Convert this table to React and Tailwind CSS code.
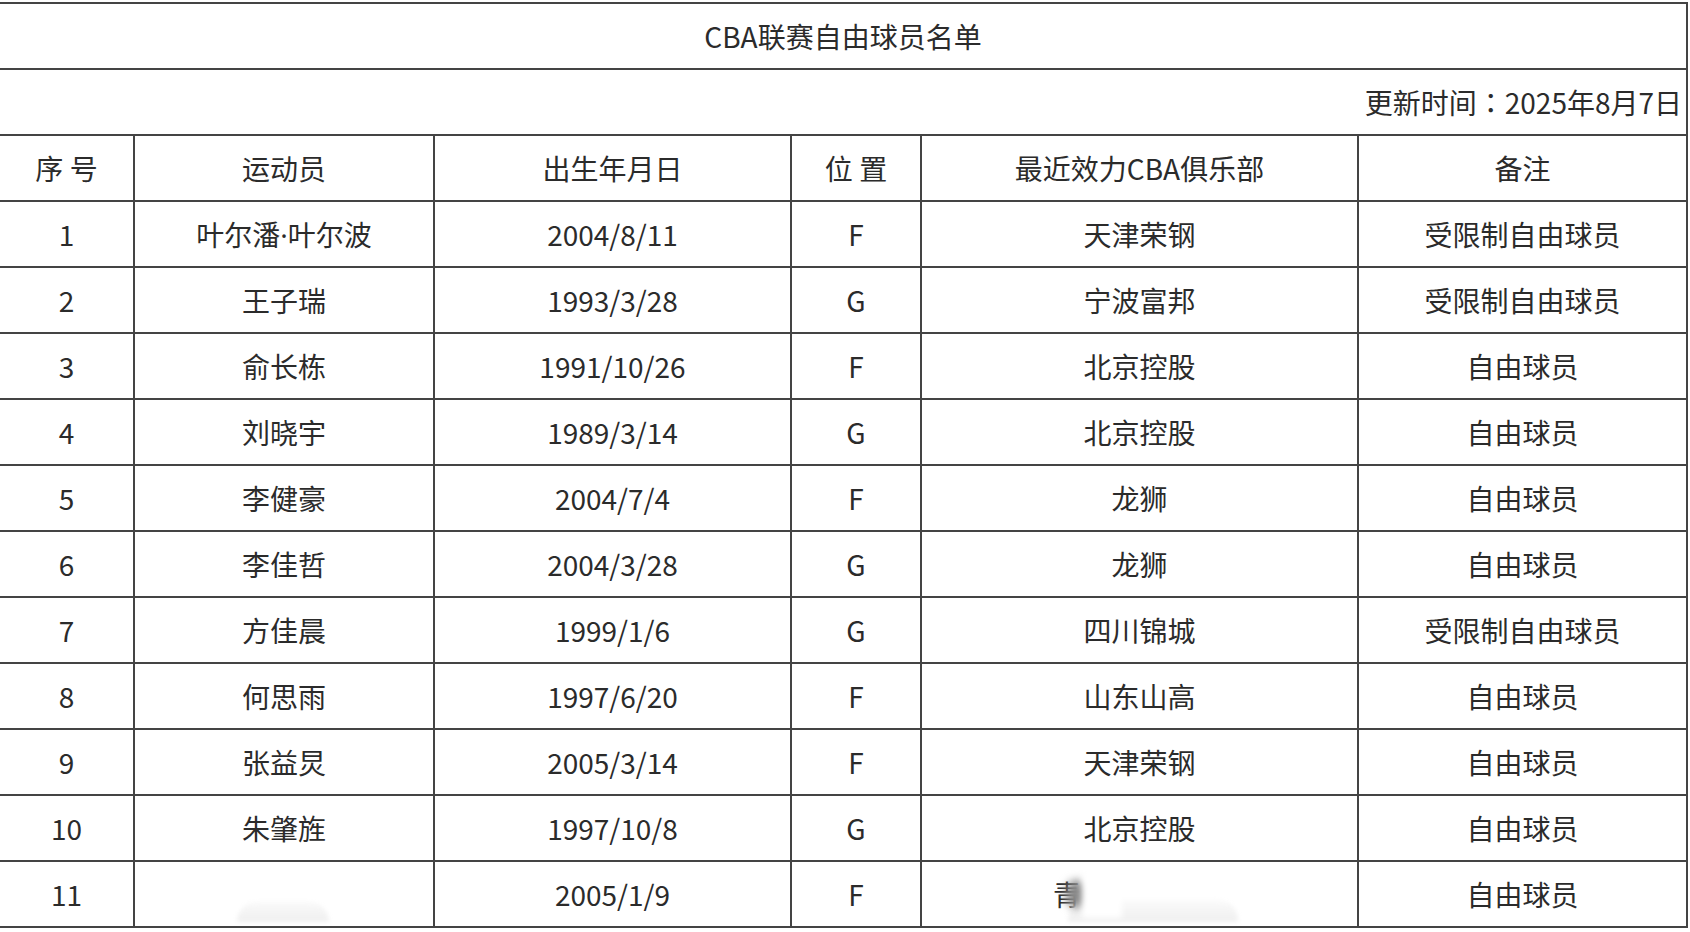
const rows = [
  ['1', '叶尔潘·叶尔波', '2004/8/11', 'F', '天津荣钢', '受限制自由球员'],
  ['2', '王子瑞', '1993/3/28', 'G', '宁波富邦', '受限制自由球员'],
  ['3', '俞长栋', '1991/10/26', 'F', '北京控股', '自由球员'],
  ['4', '刘晓宇', '1989/3/14', 'G', '北京控股', '自由球员'],
  ['5', '李健豪', '2004/7/4', 'F', '龙狮', '自由球员'],
  ['6', '李佳哲', '2004/3/28', 'G', '龙狮', '自由球员'],
  ['7', '方佳晨', '1999/1/6', 'G', '四川锦城', '受限制自由球员'],
  ['8', '何思雨', '1997/6/20', 'F', '山东山高', '自由球员'],
  ['9', '张益炅', '2005/3/14', 'F', '天津荣钢', '自由球员'],
  ['10', '朱肇旌', '1997/10/8', 'G', '北京控股', '自由球员'],
];

const cell = 'border-2 border-[#444] h-[66px] p-0 text-center align-middle font-normal';

// narrow middle dot like the source font
function Name({ text }) {
  const parts = text.split('·');
  if (parts.length === 1) return text;
  return (
    <>
      {parts[0]}
      <span className="[font-family:'Noto_Sans',sans-serif]">·</span>
      {parts[1]}
    </>
  );
}

export default function App() {
  return (
    <div className="w-[1690px] h-[932px] overflow-hidden bg-white pt-[2px] text-[28px] leading-none text-[#2b2b2b] [font-family:'Noto_Sans_CJK_SC','Noto_Sans',sans-serif]">
      <table className="w-[1688px] ml-[-2px] border-collapse table-fixed">
        <colgroup>
          <col className="w-[135px]" />
          <col className="w-[300px]" />
          <col className="w-[357px]" />
          <col className="w-[130px]" />
          <col className="w-[437px]" />
          <col className="w-[329px]" />
        </colgroup>
        <tbody>
          <tr>
            <td colSpan={6} className={cell}>CBA联赛自由球员名单</td>
          </tr>
          <tr>
            <td colSpan={6} className={`${cell} !text-right pr-[4px]`}>
              更新时间<span className="[font-family:'Noto_Sans_CJK_TC',sans-serif]">：</span>2025年8月7日
            </td>
          </tr>
          <tr>
            <th className={cell}>序 号</th>
            <th className={cell}>运动员</th>
            <th className={cell}>出生年月日</th>
            <th className={cell}>位 置</th>
            <th className={cell}>最近效力CBA俱乐部</th>
            <th className={cell}>备注</th>
          </tr>
          {rows.map((r) => (
            <tr key={r[0]}>
              {r.map((v, i) => (
                <td key={i} className={cell}>{i === 1 ? <Name text={v} /> : v}</td>
              ))}
            </tr>
          ))}
          <tr>
            <td className={cell}>11</td>
            <td className={cell}>
              <div className="relative h-full">
                <div className="absolute left-[102px] bottom-[4px] w-[92px] h-[20px] rounded-t-[30px] bg-gradient-to-t from-[#efefef] to-[#fafafa] blur-[2px]" />
              </div>
            </td>
            <td className={cell}>2005/1/9</td>
            <td className={cell}>
              F
            </td>
            <td className={cell}>
              <div className="relative h-full flex items-center">
                <span className="ml-[131px]">青</span>
                <div className="absolute left-[146px] bottom-[4px] w-[170px] h-[22px] rounded-t-[20px] bg-gradient-to-t from-[#efefef] to-[#fbfbfb] blur-[2px]" />
                <div className="absolute left-[144px] top-[18px] w-[22px] h-[28px] rounded-full bg-[#8a8a8a] blur-[4px]" />
                <div className="absolute left-[150px] top-[10px] w-[40px] h-[46px] bg-white blur-[3px] translate-x-[10px]" />
              </div>
            </td>
            <td className={cell}>自由球员</td>
          </tr>
        </tbody>
      </table>
    </div>
  );
}
